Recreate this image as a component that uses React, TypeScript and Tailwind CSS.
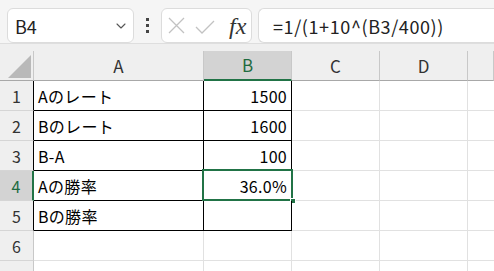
import { ChevronDown } from 'lucide-react';

const FONT = { fontFamily: '"Noto Sans CJK JP", "Noto Sans", sans-serif' };

const COLS = ['A', 'B', 'C', 'D', ''];

interface Row {
    a: string;
    b: string;
}

const ROWS: Row[] = [
    { a: 'Aのレート', b: '1500' },
    { a: 'Bのレート', b: '1600' },
    { a: 'B-A', b: '100' },
    { a: 'Aの勝率', b: '36.0%' },
    { a: 'Bの勝率', b: '' },
    { a: '', b: '' },
    { a: '', b: '' },
];

export default function App() {
    return (
        <div className="w-[494px] h-[271px] overflow-hidden bg-[#f5f5f5] text-black" style={FONT}>
            {/* Formula toolbar */}
            <div className="h-[43px] pt-[8px] pl-[7px] flex items-start">
                <div className="w-[127px] h-[35px] bg-white border border-[#dcdcdc] rounded-[6px] flex items-center justify-between pl-[7px] pr-[4px]">
                    <span className="text-[18px] leading-none text-[#222]">B4</span>
                    <ChevronDown className="w-[16px] h-[16px] text-[#555]" strokeWidth={1.6} />
                </div>
                <div className="w-[27px] h-[35px] flex flex-col items-center justify-center gap-[3px]">
                    <span className="w-[3px] h-[3px] bg-[#444]" />
                    <span className="w-[3px] h-[3px] bg-[#444]" />
                    <span className="w-[3px] h-[3px] bg-[#444]" />
                </div>
                <div className="w-[91px] h-[35px] bg-white border border-[#dcdcdc] rounded-[6px] flex items-center pl-[6px]">
                    <svg width="17" height="17" viewBox="0 0 17 17" className="text-[#c2c2c2]">
                        <path d="M1 1 L16 16 M16 1 L1 16" stroke="currentColor" strokeWidth="1.3" fill="none" />
                    </svg>
                    <svg width="20" height="14" viewBox="0 0 20 14" className="ml-[10px] mt-[2px] text-[#c2c2c2]">
                        <path d="M1 7 L7 13 L19 1" stroke="currentColor" strokeWidth="1.3" fill="none" />
                    </svg>
                    <span className="ml-[14px] text-[24px] italic leading-none text-[#333]" style={{ fontFamily: '"Liberation Serif", serif' }}>fx</span>
                </div>
                <div className="ml-[6px] flex-1 h-[35px] bg-white border border-[#dcdcdc] border-r-0 rounded-l-[6px] flex items-center pl-[14px]">
                    <span className="text-[18px] leading-none tracking-[0.6px] text-[#222]">=1/(1+10^(B3/400))</span>
                </div>
            </div>

            {/* Sheet */}
            <div className="bg-[#efefef] border-t border-[#dedede] pt-[7px]">
                <div className="grid grid-cols-[34px_170px_88px_88px_88px_1fr]">
                    {/* Header row */}
                    <div className="h-[30px] border-r border-b border-[#a8a8a8] border-r-[#c8c8c8] relative">
                        <svg className="absolute left-[8px] top-[4px]" width="24" height="23" viewBox="0 0 24 23">
                            <polygon points="0,23 23,23 23,0" fill="#b9b9b9" />
                        </svg>
                    </div>
                    {COLS.map((c, i) => (
                        <div
                            key={i}
                            className={`h-[30px] flex items-center justify-center text-[17px] border-r ${c === 'B'
                                ? 'bg-[#d3d3d3] text-[#1e6b40] border-b-2 border-b-[#217346] border-r-[#c8c8c8]'
                                : 'text-[#333] border-b border-b-[#a8a8a8] border-r-[#c8c8c8]'
                                }`}
                        >
                            {c}
                        </div>
                    ))}

                    {/* Data rows */}
                    {ROWS.map((r, i) => {
                        const n = i + 1;
                        const boxed = n <= 5;
                        const sel = n === 4;
                        return (
                            <div key={n} className="contents">
                                <div
                                    className={`h-[30px] flex items-center justify-center text-[16px] border-b border-b-[#d5d5d5] ${sel
                                        ? 'bg-[#d3d3d3] text-[#1e6b40] border-r-2 border-r-[#217346]'
                                        : boxed
                                            ? 'text-[#333] border-r border-r-black'
                                            : 'text-[#333] border-r border-r-[#c8c8c8]'
                                        }`}
                                >
                                    {n}
                                </div>
                                <div
                                    className={`h-[30px] bg-white flex items-center pl-[4px] text-[16px] tracking-[0.3px] border-r border-b ${boxed ? 'border-black' : 'border-[#e1e1e1]'}`}
                                >
                                    {r.a}
                                </div>
                                <div
                                    className={`h-[30px] bg-white flex items-center justify-end pr-[4px] text-[16px] tracking-[0.3px] border-r border-b relative ${boxed ? 'border-black' : 'border-[#e1e1e1]'}`}
                                >
                                    {r.b}
                                    {sel && (
                                        <>
                                            <div className="absolute left-[-2px] top-[-2px] right-[-2px] bottom-[-1px] border-2 border-[#217346]" />
                                            <div className="absolute right-[-5px] bottom-[-4px] w-[6px] h-[6px] bg-[#217346] border border-white" />
                                        </>
                                    )}
                                </div>
                                <div className="h-[30px] bg-white border-r border-b border-[#e1e1e1]" />
                                <div className="h-[30px] bg-white border-r border-b border-[#e1e1e1]" />
                                <div className="h-[30px] bg-white border-b border-[#e1e1e1]" />
                            </div>
                        );
                    })}
                </div>
            </div>
        </div>
    );
}
